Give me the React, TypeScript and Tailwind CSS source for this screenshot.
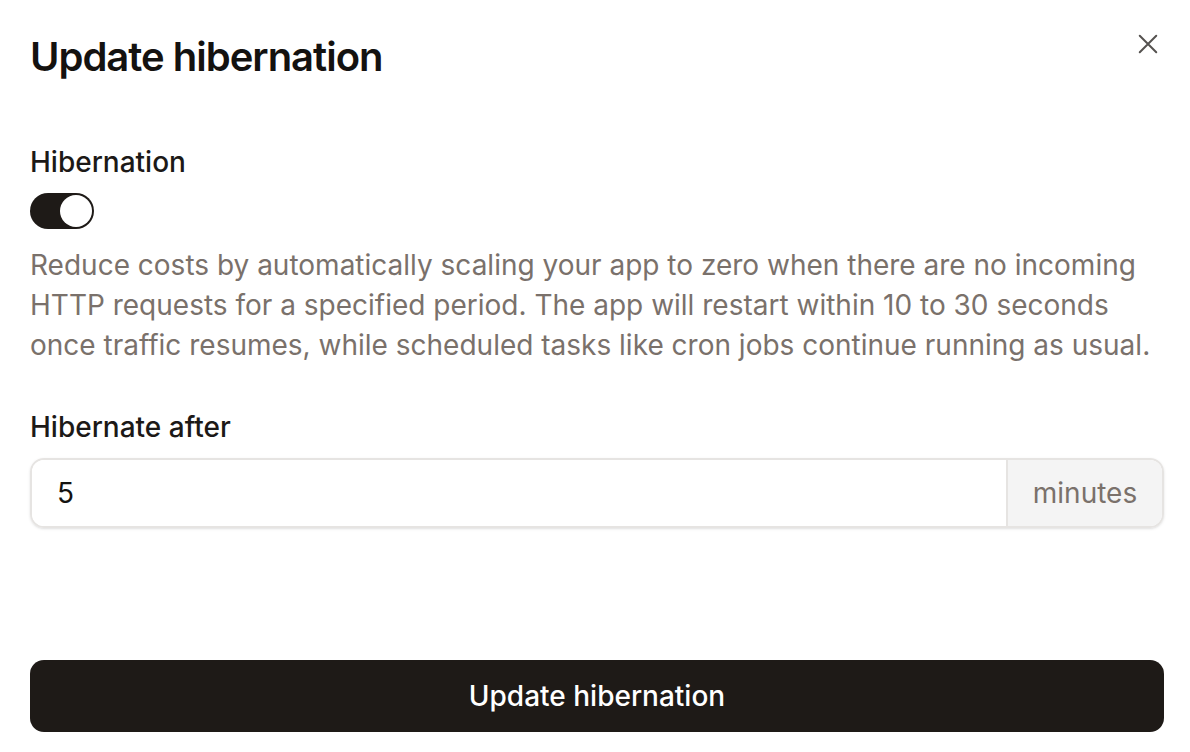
import React, { useState } from "react";

export default function App() {
  const [enabled, setEnabled] = useState(true);
  const [minutes, setMinutes] = useState("5");

  return (
    <div
      className="w-[1190px] h-[752px] bg-white flex flex-col pl-[30px] pr-[26px] pt-[30px] pb-[20px] text-[#1c1917]"
      style={{ fontFamily: "Inter, 'Noto Sans', sans-serif" }}
    >
      {/* Header */}
      <div className="flex items-start justify-between">
        <h1 className="text-[40px] leading-[54px] font-semibold tracking-[-0.025em] text-[#141210]">
          Update hibernation
        </h1>
        <button className="mt-[2px] mr-[4px] w-6 h-6 flex items-center justify-center text-[#555250]" aria-label="Close">
          <svg width="22" height="22" viewBox="0 0 24 24" fill="none" stroke="currentColor" strokeWidth="2.2" strokeLinecap="round">
            <path d="M3 3L21 21M21 3L3 21" />
          </svg>
        </button>
      </div>

      {/* Hibernation toggle */}
      <div className="mt-[60px] text-[28px] leading-[36px] font-medium">Hibernation</div>
      <button
        onClick={() => setEnabled(!enabled)}
        className={`mt-[13px] w-[64px] h-[36px] rounded-full p-[2px] flex items-center ${enabled ? "bg-[#1e1a17] justify-end" : "bg-[#e5e5e5] justify-start"}`}
      >
        <span className="w-[32px] h-[32px] rounded-full bg-white block" />
      </button>
      <p className="mt-[16px] text-[28px] leading-[40px] text-[#7a716b]">
        Reduce costs by automatically scaling your app to zero when there are no incoming HTTP requests for a
        specified period. The app will restart within 10 to 30 seconds once traffic resumes, while scheduled tasks
        like cron jobs continue running as usual.
      </p>

      {/* Hibernate after */}
      <div className="mt-[44px] text-[28px] leading-[36px] font-medium">Hibernate after</div>
      <div className="mt-[13px] h-[70px] flex rounded-[14px] border-2 border-[#e6e4e2] overflow-hidden shadow-sm">
        <input
          value={minutes}
          onChange={(e) => setMinutes(e.target.value)}
          className="flex-1 px-[25px] text-[28px] text-[#141210] outline-none bg-white"
        />
        <div className="w-[156px] border-l-2 border-[#e6e4e2] bg-[#f4f4f4] flex items-center justify-center text-[28px] text-[#7a716b]">
          minutes
        </div>
      </div>

      <button className="mt-auto h-[72px] w-full rounded-[14px] bg-[#1e1a17] text-white text-[28px] font-medium">
        Update hibernation
      </button>
    </div>
  );
}
